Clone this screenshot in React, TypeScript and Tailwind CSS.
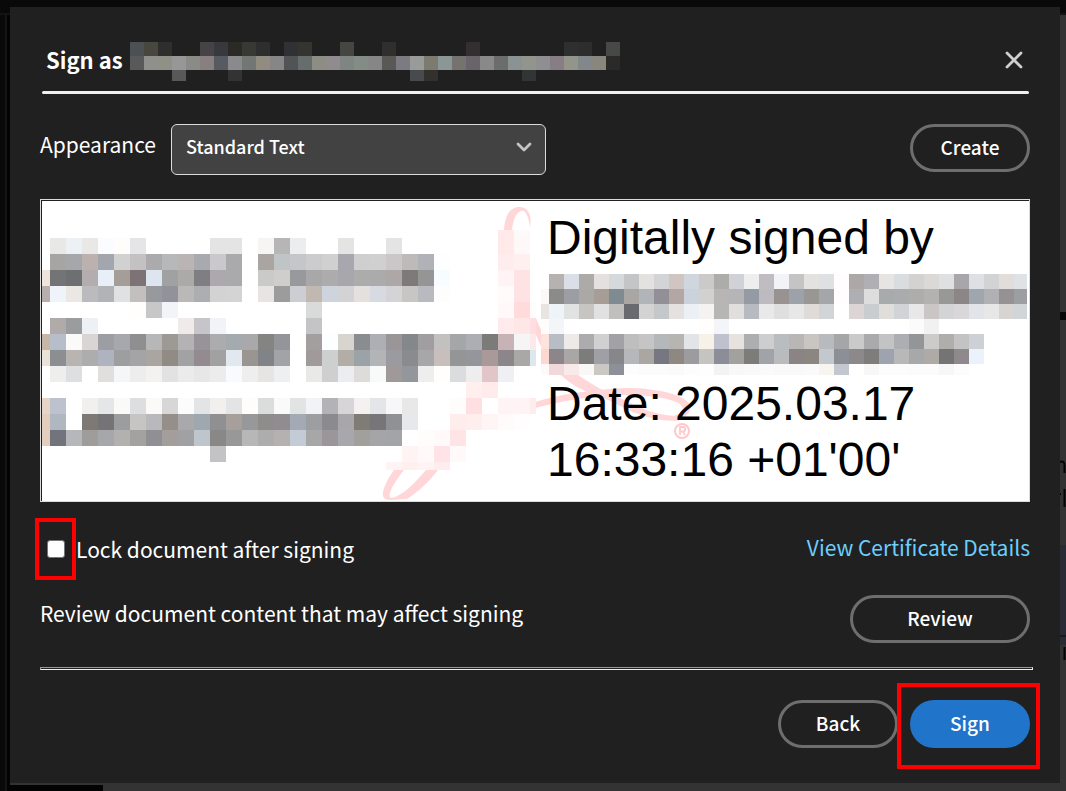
import { useState } from "react";
import type { ReactNode } from "react";
import { clsx } from "clsx";

interface MosaicProps {
  /** Left and top edge of the first cell */
  x: number;
  y: number;
  size: number;
  /** One string per row, cells separated by spaces. "." is empty, "*n" skips n cells. */
  rows: string[];
}

const HEADER_ROWS = [
  "4c5055 48473f 2e2e2e *2 464346 37393c 2b2a27 383835 2e2e2f . 303134 343431 *2 454541 *2 312f2d *5 332f31 *6 2d302f 2d2d2e . 464948",
  "58595b 8f908b 8f9086 979797 8a8a86 888080 565b62 8a898b 727773 928c80 868686 525355 676c6d 8d8e83 908b8e 7f8681 848c88 868687 585954 7c7b81 999b9a 7d7a70 8b9796 74736f 69646a 8a898a 6a6d6c 8b9293 91958b 8f8e91 867e83 93958b 81878b 87877d 2c2a28",
  "*3 585858 *3 333333 *12 484a4e 32312e *6 323435",
];

const NAME_ROWS = [
  "*29 ffe9e9 fffafa",
  ". e8e8e7 ecf1f5 e9e8e6 fafcff fffdfb e5e5e8 *4 e4e4e4 e4e4e4 . f6f5f4 b6b6b6 ecedef *2 e4e4e4 *2 e4e4e4 *6 ffe9e9 fff8f8",
  ". a6a5a3 a5a7ab bcb1af a3a7ad d1d1d1 c4c1c3 ababad b6b8ba bab5b4 a9aaaf cac8ca aaaaac . aba5a1 bfc4c7 c5c6c9 cccccf d0d0d0 a8a7ad cfcfcf d0d0d0 cbc7c9 bdbbb8 b0b2b8 fefefe *3 ffeded fff0f0",
  "efe4dc 737476 6d6f70 b3adaf e9eff8 a49d98 7d7276 dde5f0 a0a2a1 abaaa9 7f7e83 ada8ad aaaaac . cacac9 d0cecd 98999d a8a8a8 acacad a8a7ad acacac ababac ada7a8 7c7b78 959596 f7fcff *3 fff3f3 ffe2e4",
  "b8aead eff4fa ebe8e3 bbbbbe b2b3b6 dfe1e3 c4bfbf 98999d 91929a bbb9b7 adaeb1 d3d3d4 d4d4d4 . e8e4e1 9c9c9c cbcfd3 c2b8b2 cdd4de d3d3d6 e4e0dd d7dbe1 d4d3d5 c8c6c5 b9bac0 fdfdfd *3 fffbfb ffe2e4",
  "*6 fffefc c7c7c8 f2f4f7 *8 d9dada *11 fff9f9 ffdbdc fffdfb",
  ". b0aba8 9b9c9e edf1f5 *5 f0ebe8 c6c5ca f2f3f8 *5 c4c3c5 *11 ffebec ffe7e8 ffdde0",
  "c7b6a5 b6bec9 fafaf9 d9d5d3 9d9ea3 a7a8ad 8f8f8f b7b7b7 9d9994 b5b2b4 989299 acacae a5aaaf a9a9ab 848483 94959a . a39f9f fcfeff d8d4d0 8a8d8f aeafb4 9a9697 84888a a09ea0 c2c1c0 a5a6a8 adaeb3 7b7b79 c7b2b6 f5f5f5 fde9eb",
  "eae2d9 8b8f91 b8b4b1 adadad aeb3bf 9c9e9f a4a4a7 aaa5a1 908b85 a2a2a5 938b8f a1a1a2 e1e8f0 9b9592 808488 a2a3a7 . a09b99 cdd0cf b3ada8 9ca3a8 b3b4b6 9b9aa1 8a8b8c a7a7a9 c8bebb 949595 95969c a99a99 8c858a a9a8a6 dce8ee",
  ". eeeeed dedfe0 . e1dfde f4f6f8 ededed f3f2f1 e2e2e2 ebebeb e7e7e7 ececec f8fbfd eeeeee e6e5e4 eeeff1 . e9e9e8 cfcfcf ecedf0 dddcdb f8faf9 9f9a97 93969a eeeeee fffefb dbdcde eeeeee e2c5c9 eff0f4",
  "*27 ffefef ffebeb",
  "e5d4c7 bcc3ce . f1f0ef e5e6e8 fafaf8 dddee0 fcfaf8 d7d7d7 fcfcfc e3e4e6 f2f0ee e3e4e6 fffdfb dadddb fafafa e2e3e3 f2f3f6 b3b3b5 d8d5d9 f4f2f0 e4e5e8 f7f7f7 e8e8e8 *2 fffcfc ffdfe2 . fff4f4 fff3f3 ffecec",
  "e3cdbd afb7c1 . 7e7975 767377 9b9d9f c6c5c4 b9b9bd 958f8a a9a9ac 9fa7af 909093 a69f9c 979899 8e8d8b 918c8f a4aab5 9d9ea1 8b8b8f a9a6a9 817b76 787578 909194 e7e8eb *2 ffecec ffeeee fff5f5 fffbfb fffdfd",
  "e3cdbd 71747d b4b8bb 9e9d9b a6a7aa b2b1af a3a29f 909094 a39e9b a1a1a4 bec5cd 898886 989898 b7b7b7 adadad b6b1b1 c3ccd6 a7a7a8 9a969a a8a7ae a1a09d a5a5a7 a3a4a7 . fffcfc fff9f9 ffe4e6",
  "*11 c3c3c5 *11 fff3f3 fff9f9 ffe3e6 fffaf9",
  "*22 fff4f4 ffefef fff3f3 ffecec",
];

const SIGNER_ROWS = [
  ". b7b1af dadfe7 adaba8 e4e0dd d5d9dc c3c5c7 e4e2e1 d3d4d8 d0c5c1 d0d6dd cccac9 acaca9 d0d2d8 eeeeef bfbdc0 f2f3f6 c4c4c4 e3e2e1 dfe0e3 fffdfd ada8a6 afafb4 e7e5e4 d9dde0 d3d2d0 dad9d7 dfe0e2 a9a6aa dfe0e3 d2d3d5 e2ddda dee2e5",
  "fbf8f5 8b8b8a 9c9ea3 aaa9a6 a69d96 7f8a91 aaa6a4 b1b4b9 928f96 b3a7a3 ccd2da d2d1cf b7b6b4 b5b4b7 949ba4 bdbbbf 989391 9da1a9 989794 a5a6a9 fffdfd aeafb2 dddddd a7abac aaabac aeadac b3b2af 989997 8c8686 a0a6ae b1b1b4 969293 9d9ea2",
  "e7e4e1 eff4f8 e1e3e2 c6c5c2 e1e1e1 c0bfbc 686a6f d3d3d3 c5c8cb e5e1e0 eceff3 f4f3f1 b6b6b5 e0dfde b7bac0 e9e9e9 dfdfdf e7e7e7 dfdbd9 d2d5d8 . dbd6d3 cacdd0 dfdeda d0d4d7 e8e8e9 cac6c5 d3d4d6 d9d7d9 e3e4ea e7e7e8 d7d5d4 d2d5d7",
  "fffdfc f3f5f8 *9 fffefc f4f5f8 *12 fbfbfb f1f1f1",
  "fde3db b8bcc5 eeeae7 acacae d0d0d0 a1a1a6 bebebe c5c5c5 b4b8bb b6b5b2 e2e4e8 f8f1e8 bfc2ce e7e2de adaeb0 cecece b8bdc0 b8b7b5 c9c5c3 b7babe a5a6a8 cacaca aaaaad c3c3c5 adaeb3 949596 cbcbcb b0adad c3c3c3 cdd0d5",
  "fdd8d0 8c858a aba6a6 7c7c7b 9fa0a6 86868b b5b7ba aaa6a1 767781 8e8782 9c9ca0 c5c4c0 8b8d98 a2a19e 7c7c7b a0a3a7 babbbc 8a8584 8b8680 c2c8cb 8c9096 8d898a 7e7d7c 9fa2af b8b8b8 a7a8a9 aeaba7 747475 8d898d ecf2fc",
  "fffafa f1d8da f8e9eb f8f8f8 cbc8c4 8d9099 fdfdfd fbfbfb fbfbfb fafafa fdfdfd fefefe f3f3f3 f8f8f8 f9f9f9 fafafa f9f9f9 f9f9f9 fafafa f8f5f0 c3c8d0 . f7f7f7 fcfcfc fcfcfc fbfbfb fbfbfb f7f7f7 fcfcfc",
];

function Mosaic({ x, y, size, rows }: MosaicProps) {
  const cells: ReactNode[] = [];

  rows.forEach((row, r) => {
    let col = 0;
    for (const token of row.split(" ")) {
      if (token.startsWith("*")) {
        col += Number(token.slice(1));
        continue;
      }
      if (token !== ".") {
        cells.push(
          <rect
            key={`${r}-${col}`}
            x={x + col * size}
            y={y + r * size}
            width={size}
            height={size}
            fill={`#${token}`}
          />
        );
      }
      col += 1;
    }
  });

  return <g shapeRendering="crispEdges">{cells}</g>;
}

/** Watermark and redacted names behind the signature text */
function SignatureArt() {
  return (
    <svg viewBox="42 201 987 300" className="absolute inset-0 size-full" aria-hidden="true">
      <clipPath id="name-area">
        <rect x="42" y="230" width="494" height="240" />
      </clipPath>
      <clipPath id="signer-area">
        <rect x="541" y="274" width="486" height="101" />
      </clipPath>
      <g fill="#ffd7d9">
        <path d="M504 230C505 214 511 207 519 207C529 207 532 216 530 227C528 214 525 210 521 211C515 213 513 222 512 230Z" />
        <path d="M394 470C386 481 382 491 383 496C384 499 387 500 391 500L407 499C418 492 430 481 438 470L426 470C415 483 402 496 392 498C386 498 392 485 404 470Z" />
        <path d="M536 318C541 333 558 360 578 375C598 388 602 390 620 398C640 408 655 415 675 416L682 420C650 424 625 408 602 397C580 391 566 381 558 372C548 362 540 345 536 335Z" />
        <path d="M535 402C560 394 590 390 625 388C662 388 686 396 690 405C692 412 686 418 674 421L674 416C683 412 685 409 680 404C668 397 645 395 620 395C590 396 562 401 535 408Z" />
      </g>
      <circle cx="682" cy="431" r="7" fill="none" stroke="#ffc9cb" strokeWidth="2" />
      <path
        d="M680 435V427H683A2 2 0 0 1 683 431.500H680M683 431.500L685 435"
        fill="none"
        stroke="#ffc9cb"
        strokeWidth="1.800"
      />
      <g clipPath="url(#name-area)">
        <Mosaic x={34} y={222} size={16} rows={NAME_ROWS} />
      </g>
      <g clipPath="url(#signer-area)">
        <Mosaic x={534} y={274} size={15} rows={SIGNER_ROWS} />
      </g>
    </svg>
  );
}

interface PillButtonProps {
  children: ReactNode;
  primary?: boolean;
  wide?: boolean;
}

function PillButton({ children, primary = false, wide = false }: PillButtonProps) {
  return (
    <button
      type="button"
      className={clsx(
        "flex h-12 shrink-0 items-center justify-center rounded-full pb-0.5 text-[19px] font-medium text-white",
        wide ? "w-[180px]" : "w-[120px]",
        primary ? "bg-[#2074c9]" : "border-3 border-[#6e6e6e]"
      )}
    >
      {children}
    </button>
  );
}

/** Dimmed application window that shows around the dialog */
function Backdrop() {
  return (
    <div className="absolute inset-0 flex flex-col overflow-hidden bg-[#090909]" aria-hidden="true">
      <div className="h-[13px] shrink-0" />
      <div className="h-[2px] shrink-0 bg-[#131313]" />
      <div className="flex grow">
        <div className="w-[5px]" />
        <div className="w-[2px] bg-[#151515]" />
        <div className="w-[3px] bg-[#030303]" />
        <div className="flex grow flex-col justify-end bg-[#333333]">
          <div className="flex grow justify-end">
            <div className="flex w-[6px] flex-col">
              <div className="h-[297px]" />
              <div className="h-2 bg-[#090909]" />
              <div className="h-[225px]" />
              <div className="h-[90px] bg-[#2a2c35]" />
              <div className="h-[2px] bg-[#1a1a1c]" />
              <div className="h-2 bg-[#2a2c35]" />
            </div>
          </div>
          <div className="h-[6px] w-[93px] bg-[#030303]" />
        </div>
      </div>
      <svg className="absolute top-[460px] right-0 h-[200px] w-[6px]" viewBox="0 0 6 200">
        <path d="M0 2Q4 0 4.500 5V13M4.500 29V47M0 34H1M4.500 187V200" fill="none" stroke="#050505" strokeWidth="2" />
      </svg>
    </div>
  );
}

export default function App() {
  const [appearance, setAppearance] = useState("standard");
  const [locked, setLocked] = useState(false);

  return (
    <div className="relative flex min-h-screen flex-col pt-[7px] pr-[6px] pb-2 pl-[10px] font-['Noto_Sans_CJK_SC',sans-serif] text-white">
      <Backdrop />

      <main
        role="dialog"
        aria-labelledby="dialog-title"
        className="relative flex grow flex-col bg-[#202020] px-[30px] pb-[14px]"
      >
        <header className="flex h-[84px] items-center pt-6 pl-[6px]">
          <h1 id="dialog-title" className="pb-1 text-[22px] leading-[30px] font-bold whitespace-nowrap">
            Sign as
          </h1>
          <svg viewBox="0 0 490 39" className="ml-[7px] h-[39px] w-[490px] shrink-0" aria-hidden="true">
            <Mosaic x={0} y={0} size={14} rows={HEADER_ROWS} />
          </svg>
          <button type="button" aria-label="Close" className="mr-[6px] ml-auto px-px pb-0.5">
            <svg viewBox="0 0 18 18" className="size-[18px]" aria-hidden="true">
              <path d="M2 2L16 16M16 2L2 16" stroke="#cfcfcf" strokeWidth="2.800" strokeLinecap="round" />
            </svg>
          </button>
        </header>
        <div className="mr-px ml-[2px] h-[3px] rounded-full bg-[#efefef]" />

        <div className="mt-[30px] flex items-start">
          <label htmlFor="appearance" className="w-[131px] shrink-0 text-[21px] leading-[40px]">
            Appearance
          </label>
          <div className="relative w-[375px]">
            <select
              id="appearance"
              value={appearance}
              onChange={(e) => setAppearance(e.target.value)}
              className="h-[51px] w-full appearance-none rounded-md border border-[#dcdcdc] bg-[#424242] pb-1.5 pl-[14px] text-[18px] font-medium text-white"
            >
              <option value="standard">Standard Text</option>
            </select>
            <svg
              viewBox="0 0 16 10"
              className="pointer-events-none absolute top-[18px] right-[14px] h-[10px] w-4"
              aria-hidden="true"
            >
              <path
                d="M2 2L8 8L14 2"
                fill="none"
                stroke="#c4c4c4"
                strokeWidth="2.800"
                strokeLinecap="round"
                strokeLinejoin="round"
              />
            </svg>
          </div>
          <div className="ml-auto">
            <PillButton>Create</PillButton>
          </div>
        </div>

        <section
          aria-label="Signature preview"
          className="mt-6 border border-[#dcdcdc] bg-white text-black"
        >
          <div className="relative grid grid-cols-[505fr_482fr] border-t border-l border-[#202020]">
            <SignatureArt />
            <div className="relative col-start-2 flex h-[300px] flex-col pt-[9px] font-['Liberation_Sans',Arial,sans-serif] text-[48px] leading-[56px] whitespace-nowrap">
              <p>Digitally signed by</p>
              <p className="mt-[110px]">Date: 2025.03.17</p>
              <p>16:33:16 +01'00'</p>
            </div>
          </div>
        </section>

        <div className="mt-4 flex">
          <span className="-ml-[5px] flex h-[62px] w-[41px] items-center justify-center border-4 border-[#ff0000]">
            <input
              id="lock"
              type="checkbox"
              checked={locked}
              onChange={(e) => setLocked(e.target.checked)}
              className="size-[18px] appearance-none rounded-[3px] border border-[#767676] bg-white checked:bg-[#2074c9]"
            />
          </span>
          <label htmlFor="lock" className="text-[21px] leading-[62px]">
            Lock document after signing
          </label>
          <a href="#certificate" className="ml-auto text-[21px] leading-[58px] text-[#6bcfff]">
            View Certificate Details
          </a>
        </div>

        <div className="mt-[15px] flex items-start justify-between">
          <p className="text-[21px] leading-[36px]">Review document content that may affect signing</p>
          <PillButton wide>Review</PillButton>
        </div>

        <hr className="mt-6 -mr-[3px] h-[3px] border border-t-[#9a9a9a] border-r-[#eeeeee] border-b-[#eeeeee] border-l-[#9a9a9a]" />

        <footer className="mt-[13px] -mr-[10px] flex justify-end">
          <div className="-mr-px pt-[17px]">
            <PillButton>Back</PillButton>
          </div>
          <div className="relative border-4 border-[#ff0000] pt-[13px] pr-[6px] pb-[17px] pl-[9px]">
            <PillButton primary>Sign</PillButton>
          </div>
        </footer>
      </main>
    </div>
  );
}
